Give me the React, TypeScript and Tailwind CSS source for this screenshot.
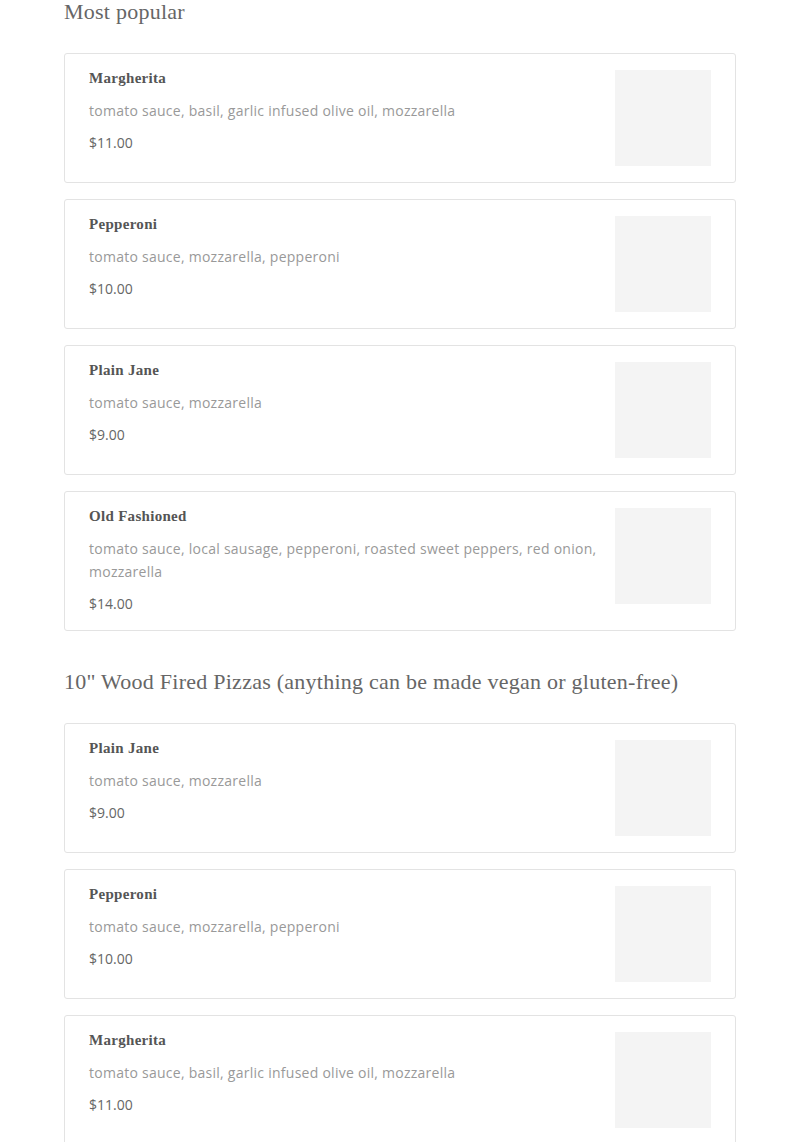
import React from "react";

type Item = { name: string; desc: string; price: string };

const popular: Item[] = [
  { name: "Margherita", desc: "tomato sauce, basil, garlic infused olive oil, mozzarella", price: "$11.00" },
  { name: "Pepperoni", desc: "tomato sauce, mozzarella, pepperoni", price: "$10.00" },
  { name: "Plain Jane", desc: "tomato sauce, mozzarella", price: "$9.00" },
  {
    name: "Old Fashioned",
    desc: "tomato sauce, local sausage, pepperoni, roasted sweet peppers, red onion, mozzarella",
    price: "$14.00",
  },
];

const pizzas: Item[] = [
  { name: "Plain Jane", desc: "tomato sauce, mozzarella", price: "$9.00" },
  { name: "Pepperoni", desc: "tomato sauce, mozzarella, pepperoni", price: "$10.00" },
  { name: "Margherita", desc: "tomato sauce, basil, garlic infused olive oil, mozzarella", price: "$11.00" },
];

function Card({ item }: { item: Item }) {
  return (
    <div className="flex gap-3 rounded-[3px] border border-[#e3e3e3] bg-white px-6 py-4">
      <div className="flex min-w-0 flex-1 flex-col">
        <div className="text-[15px] font-semibold leading-[16px] tracking-[0.3px] text-[#555] [font-family:'Liberation_Serif',serif]">
          {item.name}
        </div>
        <div className="mt-[13px] text-[14px] leading-[23px] tracking-[0.26px] text-[#999] [font-family:'Open_Sans',sans-serif]">
          {item.desc}
        </div>
        <div className="mt-[10px] text-[14px] leading-[21px] text-[#666] [font-family:'Open_Sans',sans-serif]">
          {item.price}
        </div>
      </div>
      <div className="h-24 w-24 shrink-0 bg-[#f4f4f4]" />
    </div>
  );
}

function Section({ title, items, first }: { title: string; items: Item[]; first?: boolean }) {
  return (
    <section className={first ? "" : "mt-[39px]"}>
      <h2 className="mb-[29px] text-[22px] leading-[24px] tracking-[0.25px] text-[#666] [font-family:'Liberation_Serif',serif]">
        {title}
      </h2>
      <div className="flex flex-col gap-4">
        {items.map((it, i) => (
          <Card key={i} item={it} />
        ))}
      </div>
    </section>
  );
}

export default function App() {
  return (
    <div className="min-h-screen bg-white">
      <div className="mx-auto w-[672px]">
        <Section title="Most popular" items={popular} first />
        <Section title={'10" Wood Fired Pizzas (anything can be made vegan or gluten-free)'} items={pizzas} />
      </div>
    </div>
  );
}
